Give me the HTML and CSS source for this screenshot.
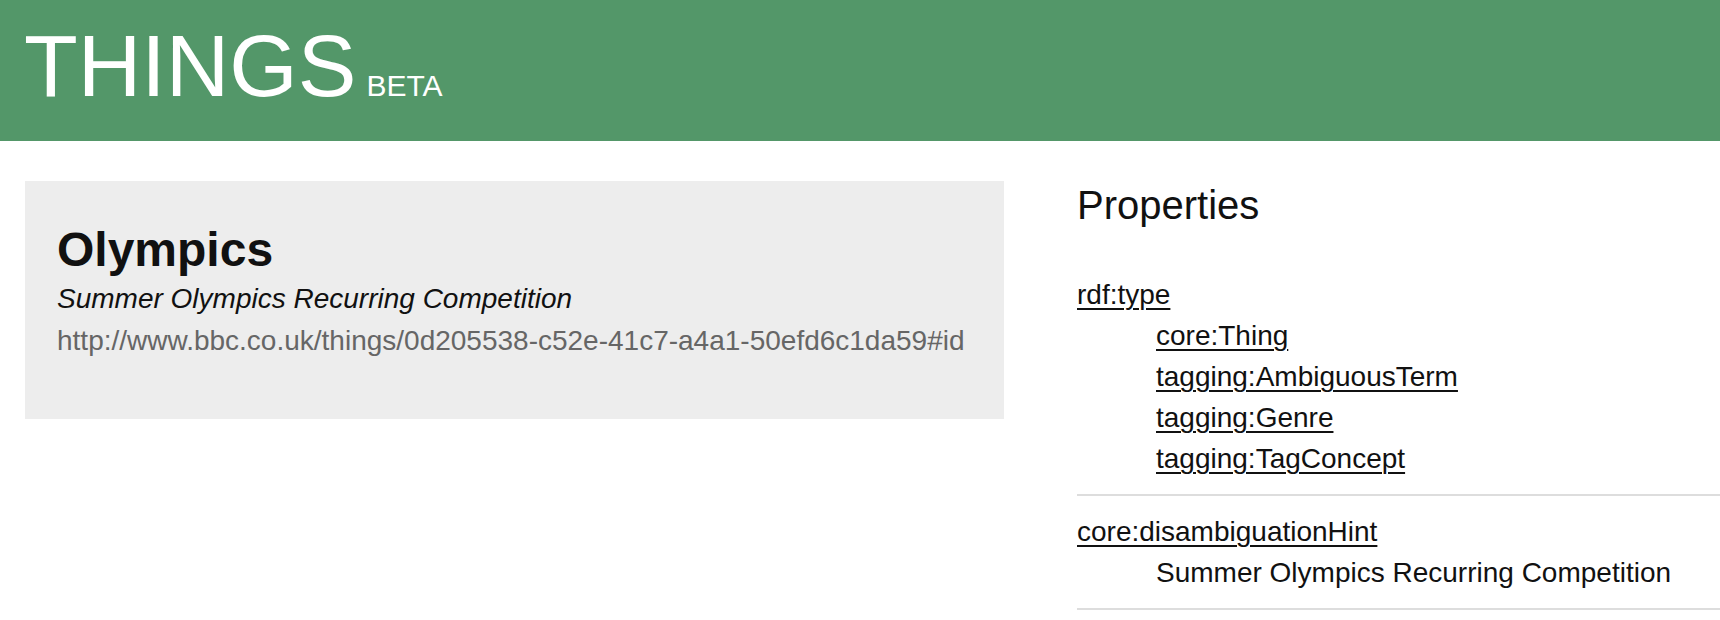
FILE: index.html
```html
<!DOCTYPE html>
<html lang="en">
<head>
<meta charset="utf-8">
<title>Things beta - Olympics</title>
<link rel="stylesheet" href="styles.css">
</head>
<body>
<header class="site-header">
  <h1 class="brand">THINGS<span class="brand-tag">BETA</span></h1>
</header>
<main class="page">
  <section class="thing-card">
    <h2 class="thing-title">Olympics</h2>
    <p class="thing-hint">Summer Olympics Recurring Competition</p>
    <p class="thing-uri">http://www.bbc.co.uk/things/0d205538-c52e-41c7-a4a1-50efd6c1da59#id</p>
  </section>
  <section class="properties">
    <h3 class="properties-title">Properties</h3>
    <dl class="prop-list">
      <div class="prop">
        <dt class="prop-name"><a href="#">rdf:type</a></dt>
        <dd class="prop-value"><a href="#">core:Thing</a></dd>
        <dd class="prop-value"><a href="#">tagging:AmbiguousTerm</a></dd>
        <dd class="prop-value"><a href="#">tagging:Genre</a></dd>
        <dd class="prop-value"><a href="#">tagging:TagConcept</a></dd>
      </div>
      <div class="prop">
        <dt class="prop-name"><a href="#">core:disambiguationHint</a></dt>
        <dd class="prop-value">Summer Olympics Recurring Competition</dd>
      </div>
    </dl>
  </section>
</main>
</body>
</html>
```
FILE: styles.css
```css
html, body {
  margin: 0;
  padding: 0;
  background: #ffffff;
  overflow: hidden;
}

body {
  font-family: "Liberation Sans", Arial, Helvetica, sans-serif;
  color: #111111;
  font-size: 28px;
}

.site-header {
  background: #539769;
  height: 141px;
  box-sizing: border-box;
  padding: 15px 24px 0;
}

.brand {
  margin: 0;
  font-size: 88px;
  font-weight: normal;
  line-height: normal;
  color: #ffffff;
  white-space: nowrap;
}

.brand-tag {
  font-size: 30px;
  margin-left: 10px;
}

.page {
  display: grid;
  grid-template-columns: 979px 1fr;
  column-gap: 73px;
  align-items: start;
  padding: 40px 0 0 25px;
}

.thing-card {
  background: #ededed;
  padding: 41px 32px 57px;
}

.thing-title {
  margin: 0;
  font-size: 48px;
  font-weight: bold;
  line-height: 56px;
  color: #111111;
}

.thing-hint {
  margin: 0;
  font-style: italic;
  line-height: 42px;
  color: #111111;
}

.thing-uri {
  margin: 0;
  line-height: 42px;
  color: #666666;
  white-space: nowrap;
}

.properties-title {
  margin: 0;
  font-size: 40px;
  font-weight: normal;
  line-height: 48px;
  color: #111111;
}

.prop-list {
  margin: 30px 0 0;
}

.prop {
  padding: 15px 0;
  border-bottom: 2px solid #dddddd;
}

.prop-name,
.prop-value {
  line-height: 41px;
  white-space: nowrap;
}

.prop-name {
  margin: 0;
}

.prop-value {
  margin: 0;
  padding-left: 79px;
}

.prop a {
  color: #111111;
  text-decoration: underline;
  text-decoration-thickness: 2px;
  text-underline-offset: 4px;
}
```
